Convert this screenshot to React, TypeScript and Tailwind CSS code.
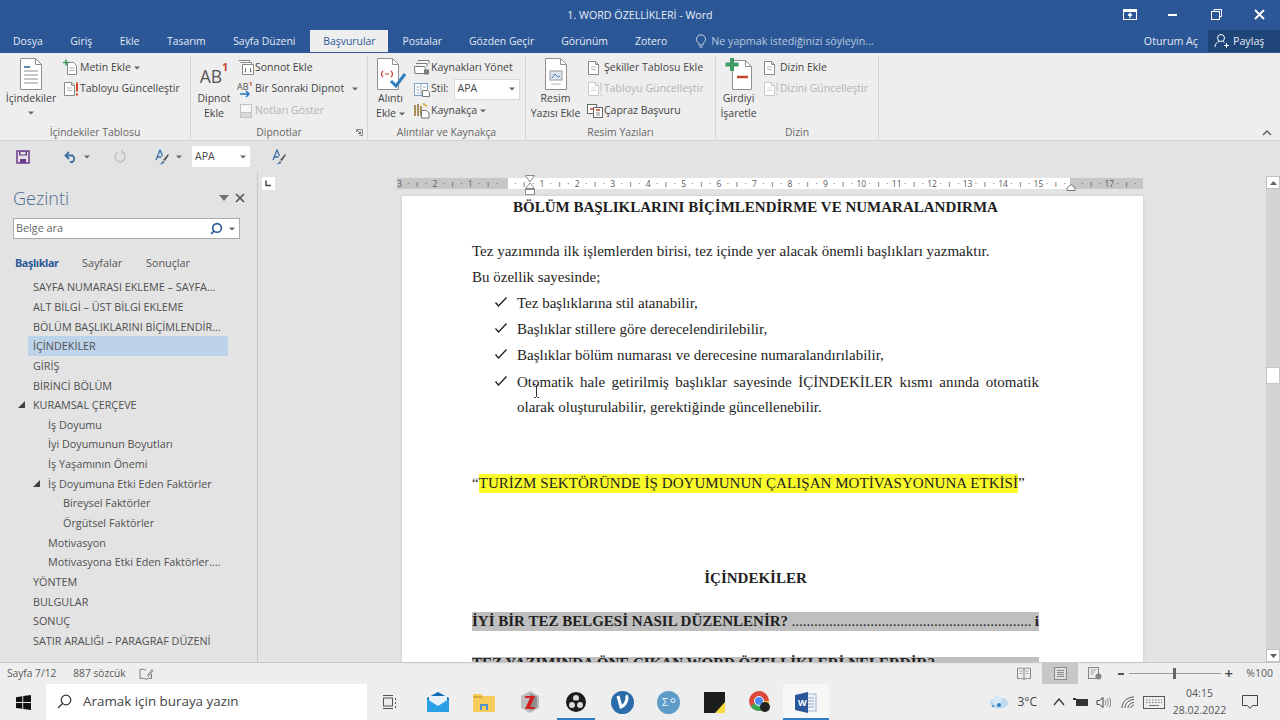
import type { ReactNode } from "react"
import { Search } from "lucide-react"

const sans = "[font-family:'Open_Sans',sans-serif]"

// small ribbon icons
function PageIcon({ disabled, mark }: { disabled?: boolean; mark?: boolean }) {
  const line = disabled ? "#c9c9c9" : "#8a8a8a"
  return (
    <svg width="18" height="16" viewBox="0 0 18 16" fill="none">
      <path d="M2.5 1.5h7l3 3v10h-10z" fill="#fff" stroke={line} />
      <path d="M9.5 1.5v3h3" stroke={line} />
      <path d="M5 7h5M5 9.5h5" stroke={disabled ? "#dcdcdc" : "#b5b5b5"} />
      {mark && <path d="M15 1.5v9M15 12.5v2" stroke={disabled ? "#d6d6d6" : "#d9482b"} strokeWidth="2" />}
    </svg>
  )
}

function AddTextIcon() {
  return (
    <svg width="18" height="17" viewBox="0 0 18 17" fill="none">
      <path d="M5.5 3.5h6l3 3v9h-9z" fill="#fff" stroke="#8a8a8a" />
      <path d="M7.5 9h5M7.5 11.5h5" stroke="#b5b5b5" />
      <path d="M4 0.5v6M1 3.5h6" stroke="#3f9b63" strokeWidth="1.6" />
    </svg>
  )
}

function FootnoteIcon() {
  return (
    <svg width="18" height="17" viewBox="0 0 18 17" fill="none">
      <path d="M1.5 1.5h11v2M3.5 3.5h11v2M5.5 5.5h11v10h-11z" stroke="#8a8a8a" fill="#fff" />
      <path d="M8.5 9v4M13.5 9v4M8.5 13h-1M13.5 13h1" stroke="#6f6f6f" />
    </svg>
  )
}

function NextFootnoteIcon() {
  return (
    <svg width="18" height="17" viewBox="0 0 18 17" fill="none">
      <text x="0" y="9" fontSize="9" fill="#555" fontFamily="Open Sans">AB</text>
      <text x="12" y="5" fontSize="6" fontWeight="700" fill="#c8452c" fontFamily="Open Sans">1</text>
      <path d="M3 13h9M9 10l3 3-3 3" stroke="#2b78c2" strokeWidth="1.6" />
    </svg>
  )
}

function NotesIcon() {
  return (
    <svg width="18" height="16" viewBox="0 0 18 16" fill="none">
      <rect x="3.5" y="1.5" width="11" height="13" fill="#f6f6f6" stroke="#c2c2c2" />
      <path d="M3.5 9.5h11" stroke="#c2c2c2" />
      <rect x="4" y="10" width="10" height="4" fill="#d9d9d9" />
    </svg>
  )
}

function ManageSourcesIcon() {
  return (
    <svg width="18" height="17" viewBox="0 0 18 17" fill="none">
      <path d="M5 1.5h11v3M3 4.5h11v3" stroke="#7b7b7b" fill="#fff" />
      <path d="M1.5 7.5h10l3 7H2z" fill="#fff" stroke="#7b7b7b" />
      <path d="M11 10.5h5v5h-5z" fill="#7b7b7b" />
    </svg>
  )
}

function StyleIcon() {
  return (
    <svg width="18" height="17" viewBox="0 0 18 17" fill="none">
      <rect x="1.5" y="2.5" width="13" height="12" fill="#fff" stroke="#7ba3c9" />
      <path d="M8 2.5v12M3.5 6h3M3.5 9h3M3.5 12h3M10 6h3" stroke="#9ab" />
      <path d="M9.5 9.5h5l2 2v4h-7z" fill="#fff" stroke="#777" />
    </svg>
  )
}

function BibIcon() {
  return (
    <svg width="18" height="17" viewBox="0 0 18 17" fill="none">
      <path d="M2 3v11M5 2v12M8 4v10" stroke="#a9905a" strokeWidth="2" />
      <path d="M10 1.5l4 3" stroke="#e0b64a" strokeWidth="2" />
      <path d="M8.5 8.5h5l2.5 2.500v5h-7.500z" fill="#fff" stroke="#777" />
    </svg>
  )
}

function CrossRefIcon() {
  return (
    <svg width="18" height="17" viewBox="0 0 18 17" fill="none">
      <rect x="1.500" y="2.500" width="9" height="9" fill="#fff" stroke="#666" />
      <rect x="7.500" y="5.500" width="9" height="10" fill="#fff" stroke="#666" />
      <path d="M4 7h4M10 8h4" stroke="#c8452c" strokeWidth="1.300" />
      <path d="M10 11h4M10 13h4" stroke="#888" />
    </svg>
  )
}

function BigDocIcon({ children, w = 30, h = 34 }: { children?: ReactNode; w?: number; h?: number }) {
  return (
    <svg width={w} height={h} viewBox="0 0 30 34" fill="none">
      <path d="M4.500 1.500h15l6 6v25h-21z" fill="#fff" stroke="#8f8f8f" />
      <path d="M19.500 1.500v6h6" stroke="#8f8f8f" />
      {children}
    </svg>
  )
}

function SmallRow({ icon, label, disabled, caret, gap }: { icon: ReactNode; label: string; disabled?: boolean; caret?: boolean; gap?: boolean }) {
  return (
    <div className={`flex items-center h-[21.5px] whitespace-nowrap ${disabled ? "text-[#b3b3b3]" : "text-[#444444]"}`}>
      <span className="flex w-[18px] h-[17px] items-center justify-center shrink-0">{icon}</span>
      <span>{label}</span>
      {caret && <Caret className={gap ? "ml-[8px]" : "ml-[3px]"} />}
    </div>
  )
}

function Caret({ className = "" }: { className?: string }) {
  return (
    <svg width="6" height="4" viewBox="0 0 6 4" className={`shrink-0 ${className}`}>
      <path d="M0 0.500h6L3 3.500z" fill="#666666" />
    </svg>
  )
}

function BigButton({ width, icon, lines, caret }: { width: string; icon: ReactNode; lines: ReactNode[]; caret?: boolean }) {
  return (
    <div className={`flex flex-col items-center shrink-0 ${width}`}>
      <div className="flex h-[35px] items-center justify-center">{icon}</div>
      <div className="text-center leading-[15px] text-[#444444] whitespace-nowrap">
        {lines.map((l, i) => (
          <div key={i}>{l}</div>
        ))}
      </div>
      {caret && <Caret className="mt-[5px]" />}
    </div>
  )
}

function Group({ width, caption, children, launcher }: { width: string; caption: string; children: ReactNode; launcher?: boolean }) {
  return (
    <div className={`relative flex flex-col shrink-0 border-r border-[#d6d6d6] ${width}`}>
      <div className="flex h-[69px] items-start">{children}</div>
      <div className="flex h-[14px] items-center justify-center text-[10.4px] leading-[14px] text-[#666666]">{caption}</div>
      {launcher && (
        <svg width="7" height="7" viewBox="0 0 7 7" className="absolute right-[4px] bottom-[3px]" fill="none">
          <path d="M0.500 3V0.500h6v6H3.500" stroke="#888" />
          <path d="M1 1l3.500 3.500M4.500 2.500v2h-2" stroke="#666" />
        </svg>
      )}
    </div>
  )
}

function Ribbon() {
  return (
    <div className="flex h-[87px] bg-[#eeeeee] pt-[3px] pb-[1px] text-[10.5px]">
      <Group width="w-[191px]" caption="İçindekiler Tablosu">
        <BigButton
          width="w-[62px]"
          caret
          lines={["İçindekiler"]}
          icon={
            <BigDocIcon>
              <path d="M8 10h6M8 14h14M8 18h14M8 22h14M8 26h14" stroke="#8f8f8f" />
              <path d="M8 10h6" stroke="#5b85b5" strokeWidth="2" />
            </BigDocIcon>
          }
        />
        <div className="mt-[1px]">
          <SmallRow icon={<AddTextIcon />} label="Metin Ekle" caret />
          <SmallRow icon={<PageIcon mark />} label="Tabloyu Güncelleştir" />
        </div>
      </Group>
      <Group width="w-[177px]" caption="Dipnotlar" launcher>
        <div className="flex flex-col items-center w-[46px] shrink-0 text-[#444444]">
          <div className="flex h-[35px] items-center">
            <span className="text-[17.5px] text-[#555555] mt-[6px]">AB</span>
            <span className="text-[11px] font-bold text-[#c8452c] -mt-[12px]">1</span>
          </div>
          <div className="text-center leading-[15px]">
            <div>Dipnot</div>
            <div>Ekle</div>
          </div>
        </div>
        <div className="mt-[1px]">
          <SmallRow icon={<FootnoteIcon />} label="Sonnot Ekle" />
          <SmallRow icon={<NextFootnoteIcon />} label="Bir Sonraki Dipnot" caret gap />
          <SmallRow icon={<NotesIcon />} label="Notları Göster" disabled />
        </div>
      </Group>
      <Group width="w-[158px]" caption="Alıntılar ve Kaynakça">
        <div className="flex flex-col items-center w-[45px] shrink-0 text-[#444444]">
          <div className="flex h-[35px] items-center">
            <svg width="30" height="34" viewBox="0 0 30 34" fill="none">
              <path d="M1.500 1.500h15l6 6v25h-21z" fill="#fff" stroke="#8f8f8f" />
              <path d="M16.500 1.500v6h6" stroke="#8f8f8f" />
              <path d="M7 14c-2 2-2 4 0 6M15 14c2 2 2 4 0 6M9 17h4" stroke="#c8452c" strokeWidth="1.200" />
              <path d="M15 24l5 5 9-12" stroke="#2f7fbf" strokeWidth="3" />
            </svg>
          </div>
          <div className="text-center leading-[15px]">
            <div>Alıntı</div>
            <div className="flex items-center">Ekle<Caret className="ml-[3px]" /></div>
          </div>
        </div>
        <div className="mt-[1px]">
          <SmallRow icon={<ManageSourcesIcon />} label="Kaynakları Yönet" />
          <div className="flex items-center h-[21.5px] text-[#444444]">
            <span className="flex w-[18px] h-[17px] items-center justify-center"><StyleIcon /></span>
            <span>Stil:</span>
            <div className="flex items-center justify-between ml-[5px] w-[66px] h-[21px] bg-white border border-[#d9d9d9] px-[3px] pr-[4px] text-[10.5px]">
              <span>APA</span>
              <Caret />
            </div>
          </div>
          <SmallRow icon={<BibIcon />} label="Kaynakça" caret />
        </div>
      </Group>
      <Group width="w-[190px]" caption="Resim Yazıları">
        <BigButton
          width="w-[59px]"
          lines={["Resim", "Yazısı Ekle"]}
          icon={
            <BigDocIcon>
              <rect x="9" y="14" width="12" height="9" fill="#dbe5f0" stroke="#9a9a9a" />
              <path d="M11 21l3-4 3 3 2-1" stroke="#4f7fb0" />
              <path d="M10 27h10" stroke="#b5b5b5" />
            </BigDocIcon>
          }
        />
        <div className="ml-[1px] mt-[1px]">
          <SmallRow icon={<PageIcon />} label="Şekiller Tablosu Ekle" />
          <SmallRow icon={<PageIcon disabled mark />} label="Tabloyu Güncelleştir" disabled />
          <SmallRow icon={<CrossRefIcon />} label="Çapraz Başvuru" />
        </div>
      </Group>
      <Group width="w-[163px]" caption="Dizin">
        <BigButton
          width="w-[45px]"
          lines={["Girdiyi", "İşaretle"]}
          icon={
            <svg width="30" height="34" viewBox="0 0 30 34" fill="none">
              <path d="M8.500 3.500h13l6 6v23h-19z" fill="#fff" stroke="#8f8f8f" />
              <path d="M21.500 3.500v6h6" stroke="#8f8f8f" />
              <path d="M13 20h11" stroke="#c8452c" strokeWidth="2.500" />
              <path d="M8 1v13M1.500 7.500h13" stroke="#3f9b63" strokeWidth="4" />
            </svg>
          }
        />
        <div className="ml-[1px] mt-[1px]">
          <SmallRow icon={<PageIcon />} label="Dizin Ekle" />
          <SmallRow icon={<PageIcon disabled mark />} label="Dizini Güncelleştir" disabled />
        </div>
      </Group>
      <div className="flex flex-1 items-end justify-end pr-[8px] pb-[3px]">
        <svg width="10" height="6" viewBox="0 0 10 6" fill="none">
          <path d="M1 5l4-4 4 4" stroke="#666666" strokeWidth="1.500" />
        </svg>
      </div>
    </div>
  )
}

function TitleBar() {
  return (
    <div className="relative flex h-[30px] items-center justify-center bg-[#2b5797] text-[10.7px] text-[#e9eef6]">
      <span>1. WORD ÖZELLİKLERİ - Word</span>
      <div className="absolute right-0 top-0 flex h-[30px] items-center">
        <svg width="14" height="11" viewBox="0 0 14 11" fill="none" className="mr-[31px] -mt-[2px]">
          <rect x="0.500" y="0.500" width="13" height="10" stroke="#fff" />
          <rect x="1" y="1" width="12" height="2" fill="#fff" />
          <path d="M7 9V5M5 6.500L7 4.500l2 2" stroke="#fff" strokeWidth="1.300" />
        </svg>
        <div className="mr-[34px] h-[2px] w-[9px] bg-white" />
        <svg width="11" height="11" viewBox="0 0 11 11" fill="none" className="mr-[32px] -mt-[1px]">
          <path d="M3 2.500V0.500h7.500v7H8.500" stroke="#fff" />
          <rect x="0.500" y="2.500" width="8" height="8" stroke="#fff" />
        </svg>
        <svg width="11" height="11" viewBox="0 0 11 11" fill="none" className="mr-[15px] -mt-[1px]">
          <path d="M1 1l9 9M10 1l-9 9" stroke="#fff" strokeWidth="1.800" />
        </svg>
      </div>
    </div>
  )
}

function TabBar() {
  return (
    <div className="flex h-[23px] items-end bg-[#2b5797] text-[10.4px] text-[#e4eaf3] whitespace-nowrap leading-[20px] border-b border-[#2b5797]">
      <div className="flex h-[22px] items-center pl-[13px] gap-[27.5px]">
        <span>Dosya</span>
        <span>Giriş</span>
        <span>Ekle</span>
        <span>Tasarım</span>
        <span>Sayfa Düzeni</span>
      </div>
      <div className="flex h-[23px] w-[78px] ml-[15px] items-center justify-center bg-[#eeeeee] text-[#2b5797]">Başvurular</div>
      <div className="flex h-[22px] items-center pl-[14px] gap-[27px]">
        <span>Postalar</span>
        <span>Gözden Geçir</span>
        <span>Görünüm</span>
        <span>Zotero</span>
      </div>
      <div className="flex h-[22px] items-center ml-[28px] text-[10.7px] text-[#b9c8de]">
        <svg width="12" height="14" viewBox="0 0 12 14" fill="none" className="mr-[4px]">
          <path d="M4 9.500C2.500 8.500 1.500 7 1.500 5.300a4.500 4.500 0 019 0c0 1.700-1 3.200-2.500 4.200V11H4zM4.500 13h3" stroke="#c9d5e6" />
        </svg>
        <span>Ne yapmak istediğinizi söyleyin...</span>
      </div>
      <div className="ml-auto flex h-[23px] items-center text-[10.7px]">
        <span className="mr-[10px]">Oturum Aç</span>
        <div className="flex h-[23px] w-[72px] items-center bg-[#1f4478] pl-[6px] gap-[4px]">
          <svg width="15" height="15" viewBox="0 0 15 15" fill="none">
            <circle cx="7" cy="5" r="3.500" stroke="#fff" />
            <path d="M1 14c0-3 2-5 4-5.500M9 8.500c.5.200 1 .5 1.500.8M10 12.500h5M12.500 10v5" stroke="#fff" />
          </svg>
          <span>Paylaş</span>
        </div>
      </div>
    </div>
  )
}

function ABrush() {
  return (
    <svg width="16" height="16" viewBox="0 0 16 16" fill="none">
      <path d="M1 11L5 1l2.500 6M2.500 8h4" stroke="#3a6ea5" strokeWidth="1.300" />
      <path d="M8 11l5-6 1 1-4 6z" fill="#5a5a5a" />
      <path d="M4 15c2 0 3-1 3.500-3l2 1c-.5 1.500-3 3-5.500 2z" fill="#3a6ea5" />
    </svg>
  )
}

function QuickBar() {
  return (
    <div className="flex h-[32px] items-center bg-[#e3e3e3] border-t border-[#d4d4d4] text-[10.5px] text-[#444444]">
      <svg width="14" height="14" viewBox="0 0 14 14" fill="none" className="ml-[16px]">
        <path d="M1 1h12v12H1z" stroke="#6b3a8e" strokeWidth="1.500" />
        <path d="M3 1.500h8v4H3zM4 9h6v4H4z" fill="#6b3a8e" />
        <rect x="4.500" y="2" width="5" height="2.500" fill="#e3e3e3" />
      </svg>
      <svg width="14" height="12" viewBox="0 0 14 12" fill="none" className="ml-[34px]">
        <path d="M1.500 4.500h7a4 4 0 010 6.500H6" stroke="#3a6ea5" strokeWidth="1.800" />
        <path d="M5 1L1.500 4.500 5 8" stroke="#3a6ea5" strokeWidth="1.800" />
      </svg>
      <Caret className="ml-[6px]" />
      <svg width="13" height="13" viewBox="0 0 13 13" fill="none" className="ml-[24px]">
        <path d="M8 2.200A5 5 0 1 1 3.500 2.500M8 0v3H11" stroke="#b9b9b9" strokeWidth="1.200" />
      </svg>
      <span className="ml-[28px] flex"><ABrush /></span>
      <Caret className="ml-[5px]" />
      <div className="ml-[10px] flex h-[21px] w-[58px] items-center justify-between bg-white px-[3px] pr-[4px]">
        <span>APA</span>
        <Caret />
      </div>
      <span className="ml-[22px] flex"><ABrush /></span>
    </div>
  )
}

const tree: { label: string; level: number; open?: boolean; active?: boolean }[] = [
  { label: "SAYFA NUMARASI EKLEME – SAYFA...", level: 0 },
  { label: "ALT BİLGİ – ÜST BİLGİ EKLEME", level: 0 },
  { label: "BÖLÜM BAŞLIKLARINI BİÇİMLENDİR...", level: 0 },
  { label: "İÇİNDEKİLER", level: 0, active: true },
  { label: "GİRİŞ", level: 0 },
  { label: "BİRİNCİ BÖLÜM", level: 0 },
  { label: "KURAMSAL ÇERÇEVE", level: 0, open: true },
  { label: "İş Doyumu", level: 1 },
  { label: "İyi Doyumunun Boyutları", level: 1 },
  { label: "İş Yaşamının Önemi", level: 1 },
  { label: "İş Doyumuna Etki Eden Faktörler", level: 1, open: true },
  { label: "Bireysel Faktörler", level: 2 },
  { label: "Örgütsel Faktörler", level: 2 },
  { label: "Motivasyon", level: 1 },
  { label: "Motivasyona Etki Eden Faktörler....", level: 1 },
  { label: "YÖNTEM", level: 0 },
  { label: "BULGULAR", level: 0 },
  { label: "SONUÇ", level: 0 },
  { label: "SATIR ARALIĞI – PARAGRAF DÜZENİ", level: 0 },
]

function NavPane() {
  return (
    <div className="flex w-[258px] shrink-0 flex-col border-r border-[#c6c6c6] bg-[#e3e3e3] text-[10.8px] text-[#505050]">
      <div className="flex h-[36px] items-center pl-[13px] pr-[12px] pt-[16px]">
        <span className="text-[18px] leading-[24px] font-light text-[#4f6d92]">Gezinti</span>
        <svg width="10" height="6" viewBox="0 0 10 6" className="ml-auto mr-[6px]">
          <path d="M0 0h10L5 6z" fill="#707070" />
        </svg>
        <svg width="10" height="10" viewBox="0 0 10 10" fill="none">
          <path d="M1 1l8 8M9 1l-8 8" stroke="#555555" strokeWidth="1.700" />
        </svg>
      </div>
      <div className="mx-[13px] mt-[10px] flex h-[21px] w-[227px] items-center border border-[#ababab] bg-white pl-[2px] pr-[4px] text-[#666666]">
        <span>Belge ara</span>
        <Search size={13} strokeWidth={3} className="ml-auto mr-[6px] -scale-x-100 text-[#2b5797]" />
        <Caret />
      </div>
      <div className="mt-[14px] flex h-[20px] items-center pl-[15px] text-[#555555]">
        <span className="w-[67px] font-bold text-[#2b5797] tracking-[-0.4px]">Başlıklar</span>
        <span className="w-[64px]">Sayfalar</span>
        <span>Sonuçlar</span>
      </div>
      <div className="mt-[4.5px] pl-[28px] pr-[29px]">
        {tree.map((t) => (
          <div
            key={t.label}
            className={`relative flex h-[19.67px] items-center whitespace-nowrap pl-[5px] ${t.active ? "bg-[#bdd3ea]" : ""}`}
          >
            <span className={t.level === 1 ? "ml-[15px]" : t.level === 2 ? "ml-[30px]" : ""}>{t.label}</span>
            {t.open && (
              <svg
                width="7"
                height="7"
                viewBox="0 0 7 7"
                className={`absolute top-[6px] ${t.level === 1 ? "left-[5px]" : "-left-[10px]"}`}
              >
                <path d="M7 0v7H0z" fill="#404040" />
              </svg>
            )}
          </div>
        ))}
      </div>
    </div>
  )
}

function RulerCell({ n }: { n?: number }) {
  return (
    <div className="grid w-[35.44px] shrink-0 grid-cols-4 text-center text-[8.5px] leading-[11px] text-[#5a5a5a]">
      <span>{n ?? ""}</span>
      <span>·</span>
      <span>ı</span>
      <span>·</span>
    </div>
  )
}

function Ruler() {
  const white = Array.from({ length: 16 }, (_, i) => i)
  return (
    <div className="relative flex h-[11px] w-[746px] bg-[#c6c6c6]">
      <div className="flex w-[111px] overflow-hidden">
        <div className="flex -ml-[2px]">
          <RulerCell n={3} />
          <RulerCell n={2} />
          <RulerCell n={1} />
        </div>
      </div>
      <div className="flex w-[562px] overflow-hidden bg-white">
        <div className="flex -ml-[6px]">
          {white.map((i) => (
            <RulerCell key={i} n={i === 0 ? undefined : i} />
          ))}
        </div>
      </div>
      <div className="flex w-[73px] overflow-hidden">
        <div className="flex -ml-[1px]">
          <RulerCell />
          <RulerCell n={17} />
        </div>
      </div>
      <svg width="12" height="21" viewBox="0 0 12 21" fill="none" className="absolute left-[127px] -top-[3px]">
        <path d="M1.500 0.500h9L6 7zM6 8l4.500 5.500h-9z" fill="#fff" stroke="#8a8a8a" />
        <rect x="1.500" y="14.500" width="9" height="5" fill="#fff" stroke="#8a8a8a" />
      </svg>
      <svg width="10" height="7" viewBox="0 0 10 7" fill="none" className="absolute left-[669px] top-[6px]">
        <path d="M5 0.500L9 4v2.500H1V4z" fill="#fff" stroke="#777" />
      </svg>
    </div>
  )
}

function DocLine({ className = "", children }: { className?: string; children: ReactNode }) {
  return <div className={`h-[22px] leading-[22px] whitespace-nowrap ${className}`}>{children}</div>
}

function ListItem({ children }: { children: ReactNode }) {
  return (
    <div className="flex h-[26.3px] items-center">
      <svg width="12" height="10" viewBox="0 0 12 10" fill="none" className="ml-[23px] mr-[10px] -mt-[3px] shrink-0">
        <path d="M0.500 5.500l3 3.500 8-8.500" stroke="#1e1e1e" strokeWidth="1.300" />
      </svg>
      <span className="w-[522px] whitespace-nowrap">{children}</span>
    </div>
  )
}

function Page() {
  return (
    <div className="relative ml-[5px] mt-[7px] flex-1 overflow-hidden bg-white pl-[70px] pr-[104px] [font-family:'Liberation_Serif',serif] text-[15px] text-[#1e1e1e] shadow-[0_0_3px_#c4c4c4]">
      <DocLine className="text-center font-bold">BÖLÜM BAŞLIKLARINI BİÇİMLENDİRME VE NUMARALANDIRMA</DocLine>
      <DocLine className="mt-[22px]">Tez yazımında ilk işlemlerden birisi, tez içinde yer alacak önemli başlıkları yazmaktır.</DocLine>
      <DocLine className="mt-[4px]">Bu özellik sayesinde;</DocLine>
      <div className="mt-[2px]">
        <ListItem>Tez başlıklarına stil atanabilir,</ListItem>
        <ListItem>Başlıklar stillere göre derecelendirilebilir,</ListItem>
        <ListItem>Başlıklar bölüm numarası ve derecesine numaralandırılabilir,</ListItem>
        <ListItem>
          <span className="block [text-align:justify] [text-align-last:justify]">
            Otomatik hale getirilmiş başlıklar sayesinde İÇİNDEKİLER kısmı anında otomatik
          </span>
        </ListItem>
        <div className="h-[25px] pl-[45px] leading-[25px] whitespace-nowrap">olarak oluşturulabilir, gerektiğinde güncellenebilir.</div>
      </div>
      <DocLine className="mt-[52px] flex items-center">
        “<span className="inline-block h-[19px] leading-[19px] tracking-[0.05px] bg-[#fbfb2c]">TURİZM SEKTÖRÜNDE İŞ DOYUMUNUN ÇALIŞAN MOTİVASYONUNA ETKİSİ</span>”
      </DocLine>
      <DocLine className="mt-[73px] text-center font-bold">İÇİNDEKİLER</DocLine>
      <div className="mt-[23px] flex h-[19px] justify-between whitespace-nowrap bg-[#bfbfbf] font-bold leading-[18px]">
        <span>İYİ BİR TEZ BELGESİ NASIL DÜZENLENİR?</span>
        <span className="font-normal">{".".repeat(64)}</span>
        <span>i</span>
      </div>
      <div className="mt-[26px] h-[19px] whitespace-nowrap bg-[#bfbfbf] font-bold leading-[13px]">TEZ YAZIMINDA ÖNE ÇIKAN WORD ÖZELLİKLERİ NELERDİR?</div>
      {/* text cursor hovering over the list */}
      <svg width="7" height="14" viewBox="0 0 7 14" fill="none" className="absolute left-[131px] top-[188px]">
        <path d="M1 0.500h1.500l1 1 1-1H6M3.500 1.500v11M1 13.500h1.500l1-1 1 1H6" stroke="#333333" />
      </svg>
    </div>
  )
}

function ScrollBar() {
  return (
    <div className="ml-auto flex w-[14px] shrink-0 flex-col bg-[#d4d4d4] mt-[4px]">
      <div className="flex h-[13px] items-center justify-center bg-white border border-[#c0c0c0]">
        <svg width="7" height="4" viewBox="0 0 7 4"><path d="M0 4h7L3.500 0z" fill="#606060" /></svg>
      </div>
      <div className="mt-[178px] h-[17px] bg-white border border-[#c6c6c6]" />
      <div className="mt-auto flex h-[13px] items-center justify-center bg-white border border-[#c0c0c0]">
        <svg width="7" height="4" viewBox="0 0 7 4"><path d="M0 0h7L3.500 4z" fill="#606060" /></svg>
      </div>
    </div>
  )
}

function DocArea() {
  return (
    <div className="flex min-w-0 flex-1 bg-[#e3e3e3]">
      <div className="w-[139px] shrink-0 pl-[4px] pt-[5px]">
        <div className="flex h-[13px] w-[13px] items-center justify-center bg-white">
          <svg width="7" height="7" viewBox="0 0 7 7" fill="none"><path d="M1 0.500v5h5" stroke="#444444" strokeWidth="1.500" /></svg>
        </div>
      </div>
      <div className="flex w-[746px] shrink-0 flex-col pt-[6px]">
        <Ruler />
        <Page />
      </div>
      <ScrollBar />
    </div>
  )
}

function StatusBar() {
  return (
    <div className="flex h-[22px] items-center border-t border-[#c8c8c8] bg-[#eeeeee] text-[10.2px] text-[#5a5a5a]">
      <span className="ml-[7px]">Sayfa 7/12</span>
      <span className="ml-[17px]">887 sözcük</span>
      <svg width="15" height="12" viewBox="0 0 15 12" fill="none" className="ml-[13px]">
        <path d="M7 2.500C5.500 1 3 1 1 1.500v9c2-.5 4.500-.5 6 1 1-1 3-1.500 5.500-1V6" stroke="#7b7b7b" />
        <path d="M8.500 7.500L13 1.500l1 1-4.500 6z" stroke="#7b7b7b" />
      </svg>
      <div className="ml-auto flex items-center h-[22px]">
        <svg width="14" height="13" viewBox="0 0 14 13" fill="none" className="mr-[11px]">
          <path d="M7 2C5 .8 3 .8.500 1.200v10.500C3 11.300 5 11.300 7 12.500c2-1.200 4-1.200 6.500-.8V1.200C11 .8 9 .8 7 2zM7 2v10.500" stroke="#858585" />
          <path d="M2.500 4h3M2.500 6.500h3M8.500 4h3M8.500 6.500h3" stroke="#a5a5a5" />
        </svg>
        <div className="flex h-[22px] w-[36px] items-center justify-center bg-[#c8c8c8]">
          <svg width="13" height="13" viewBox="0 0 13 13" fill="none">
            <rect x="0.500" y="0.500" width="12" height="12" fill="#dedede" stroke="#8a8a8a" />
            <path d="M3 3.500h7M3 5.500h7M3 7.500h7M3 9.500h7" stroke="#8a8a8a" />
          </svg>
        </div>
        <svg width="14" height="13" viewBox="0 0 14 13" fill="none" className="ml-[10px]">
          <rect x="0.500" y="0.500" width="10" height="11" stroke="#858585" />
          <path d="M2.500 3h6M2.500 5h4M2.500 7h3" stroke="#a5a5a5" />
          <circle cx="10.500" cy="9.500" r="3" fill="#858585" />
        </svg>
        <span className="ml-[16px] h-[2px] w-[6px] bg-[#555555]" />
        <div className="relative ml-[5px] h-[1px] w-[92px] bg-[#9a9a9a]">
          <div className="absolute left-[44px] -top-[5px] h-[11px] w-[3px] bg-[#666666]" />
        </div>
        <span className="ml-[3px] w-[9px] text-center text-[15px] leading-[15px] text-[#444444] font-semibold">+</span>
        <span className="ml-[13px] mr-[7px] text-[10.5px]">%100</span>
      </div>
    </div>
  )
}

function TaskCell({ children, active, running }: { children: ReactNode; active?: boolean; running?: boolean }) {
  return (
    <div className={`relative flex h-[36px] w-[46px] shrink-0 items-center justify-center ${active ? "bg-[#f7f7f7]" : ""}`}>
      {children}
      {running && <div className="absolute bottom-0 left-[4px] right-[4px] h-[2px] bg-[#2f7fc1]" />}
      {active && <div className="absolute bottom-0 left-0 right-0 h-[2px] bg-[#2f7fc1]" />}
    </div>
  )
}

function Taskbar() {
  return (
    <div className="flex h-[36px] items-center bg-[#eeeeee] text-[#444444] shrink-0">
      <div className="flex w-[46px] justify-center">
        <svg width="15" height="15" viewBox="0 0 15 15">
          <path d="M0 2.200L6.300 1.200V7H0zM7.200 1.100L15 0v7H7.200zM0 8h6.300v5.800L0 12.900zM7.200 8H15v7l-7.800-1.100z" fill="#111111" />
        </svg>
      </div>
      <div className="flex h-[36px] w-[321px] items-center bg-white pl-[11px] pb-[1px] text-[13.4px]">
        <svg width="15" height="15" viewBox="0 0 15 15" fill="none" className="mr-[11px]">
          <circle cx="9" cy="6" r="4.800" stroke="#333333" strokeWidth="1.200" />
          <path d="M5.500 9.500L1 14" stroke="#333333" strokeWidth="1.200" />
        </svg>
        <span>Aramak için buraya yazın</span>
      </div>
      <div className="flex w-[46px] justify-center">
        <svg width="16" height="15" viewBox="0 0 16 15" fill="none">
          <rect x="1.500" y="3" width="9" height="8" stroke="#555555" />
          <path d="M1 0.500h10M1 13.500h10M13.500 3v2M13.500 7v2M13.500 11v2" stroke="#555555" />
        </svg>
      </div>
      <div className="flex ml-[2px]">
        <TaskCell>
          <svg width="24" height="22" viewBox="0 0 24 22">
            <path d="M1 7l11-6 11 6v14H1z" fill="#0f6cb5" />
            <path d="M3 5h18v9l-9 4-9-4z" fill="#e8f2fa" />
            <path d="M1 8l11 7 11-7v13H1z" fill="#2aa0e6" />
          </svg>
        </TaskCell>
        <TaskCell>
          <svg width="22" height="20" viewBox="0 0 22 20">
            <path d="M0 2h8l2 2h12v16H0z" fill="#f6cd5a" />
            <rect x="0" y="4" width="9" height="2" fill="#d9a93a" />
            <path d="M7 12h8v6h-2v-4H9v4H7z" fill="#4d93c7" />
          </svg>
        </TaskCell>
        <TaskCell>
          <svg width="20" height="22" viewBox="0 0 20 22">
            <path d="M10 0l9 5v12l-9 5-9-5V5z" fill="#bdbdbd" />
            <path d="M10 2l7 4v10l-7 4z" fill="#8e8e8e" />
            <path d="M5 5h10l-5 11h5v2H5l5-11H5z" fill="#d22020" />
          </svg>
        </TaskCell>
        <TaskCell running>
          <svg width="20" height="20" viewBox="0 0 20 20">
            <circle cx="10" cy="10" r="10" fill="#1c1c1c" />
            <circle cx="10" cy="6" r="3" fill="#dcdcdc" />
            <circle cx="6" cy="13" r="3" fill="#dcdcdc" />
            <circle cx="14" cy="13" r="3" fill="#dcdcdc" />
            <circle cx="10" cy="10" r="1.800" fill="#1c1c1c" />
          </svg>
        </TaskCell>
        <TaskCell>
          <svg width="23" height="23" viewBox="0 0 23 23">
            <circle cx="11.500" cy="11.500" r="11.500" fill="#2b6cab" />
            <path d="M7 5l3 11c3-1 6-5 6-9 0-1-.3-2-1-2.500" fill="none" stroke="#fff" strokeWidth="3" />
          </svg>
        </TaskCell>
        <TaskCell>
          <svg width="23" height="23" viewBox="0 0 23 23">
            <circle cx="11.500" cy="11.500" r="11.500" fill="#5f9bc8" />
            <text x="5" y="15" fontSize="11" fill="#f2f7fb" fontFamily="Open Sans">Σ</text>
            <circle cx="16" cy="9.500" r="2" fill="none" stroke="#f2f7fb" />
          </svg>
        </TaskCell>
        <TaskCell>
          <svg width="21" height="21" viewBox="0 0 21 21">
            <rect width="21" height="21" fill="#1d1d1d" />
            <path d="M21 10v11H11z" fill="#f5dc3a" />
          </svg>
        </TaskCell>
        <TaskCell>
          <svg width="22" height="22" viewBox="0 0 22 22">
            <circle cx="10" cy="10" r="10" fill="#dd4a3b" />
            <path d="M10 10L1.500 15A10 10 0 0015 18.700z" fill="#3aa757" />
            <path d="M10 10l5 8.700A10 10 0 0020 10z" fill="#f7c830" />
            <circle cx="10" cy="10" r="4.500" fill="#4c8bf5" stroke="#fff" />
            <circle cx="16" cy="16" r="5" fill="#222222" />
          </svg>
        </TaskCell>
        <TaskCell active>
          <svg width="22" height="21" viewBox="0 0 22 21">
            <rect x="8" y="2" width="13" height="17" fill="#f2f4f8" stroke="#9fb4d2" />
            <path d="M13 6h6M13 9h6M13 12h6M13 15h6" stroke="#8ea7c9" />
            <path d="M0 3l13-3v21L0 18z" fill="#2b579a" />
            <text x="3" y="14" fontSize="9" fontWeight="700" fill="#fff" fontFamily="Open Sans">W</text>
          </svg>
        </TaskCell>
      </div>
      <div className="ml-auto flex items-center">
        <svg width="20" height="14" viewBox="0 0 20 14" className="mr-[8px]">
          <ellipse cx="10" cy="8" rx="9" ry="5.500" fill="#bcd9f0" />
          <circle cx="8" cy="5" r="4.500" fill="#d8e9f6" />
          <circle cx="10" cy="10" r="2" fill="#2f7fc1" />
          <circle cx="4" cy="11" r="1" fill="#2f7fc1" />
        </svg>
        <span className="text-[12px] mr-[16px]">3°C</span>
        <svg width="12" height="8" viewBox="0 0 12 8" fill="none" className="mr-[8px]">
          <path d="M1 7l5-6 5 6" stroke="#333333" strokeWidth="1.200" />
        </svg>
        <svg width="16" height="10" viewBox="0 0 16 10" className="mr-[7px]">
          <path d="M0 1h3v2H0z" fill="#333333" />
          <rect x="3" y="2" width="12" height="7" fill="#333333" />
        </svg>
        <svg width="15" height="13" viewBox="0 0 15 13" fill="none" className="mr-[10px]">
          <path d="M1 4.500h2.500L7 1.500v10l-3.500-3H1z" stroke="#444444" />
          <path d="M9 4c1 1.500 1 3.500 0 5M11 2.500c1.500 2.500 1.500 5.500 0 8M13.500 1.500c1.500 3 1.500 7 0 10" stroke="#888888" />
        </svg>
        <svg width="14" height="13" viewBox="0 0 14 13" fill="none" className="mr-[8px]">
          <path d="M1 12c0-6 5-11 12-11M4 12c0-4.500 4-8.500 9-8.500M7 12c0-3 3-5.500 6-5.500M10 12c0-1.500 1.500-3 3-3" stroke="#555555" />
        </svg>
        <svg width="22" height="13" viewBox="0 0 22 13" fill="none" className="mr-[7px]">
          <rect x="0.500" y="0.500" width="21" height="12" stroke="#555555" />
          <path d="M3 4h16M3 6.500h16" stroke="#777777" strokeDasharray="1.500 1.500" />
          <path d="M6 9.500h10" stroke="#777777" />
        </svg>
        <div className="w-[55px] text-center text-[10.5px] leading-[17px] text-[#555555]">
          <div>04:15</div>
          <div className="whitespace-nowrap">28.02.2022</div>
        </div>
        <svg width="16" height="15" viewBox="0 0 16 15" fill="none" className="ml-[15px] mr-[22px]">
          <path d="M0.500 0.500h15v10h-5l-2.500 3-2.500-3h-5z" stroke="#444444" />
        </svg>
      </div>
    </div>
  )
}

export default function App() {
  return (
    <div className={`flex h-[720px] w-[1280px] flex-col overflow-hidden bg-[#e3e3e3] ${sans}`}>
      <TitleBar />
      <TabBar />
      <Ribbon />
      <QuickBar />
      <div className="flex h-[490px] min-h-0">
        <NavPane />
        <DocArea />
      </div>
      <StatusBar />
      <Taskbar />
    </div>
  )
}
